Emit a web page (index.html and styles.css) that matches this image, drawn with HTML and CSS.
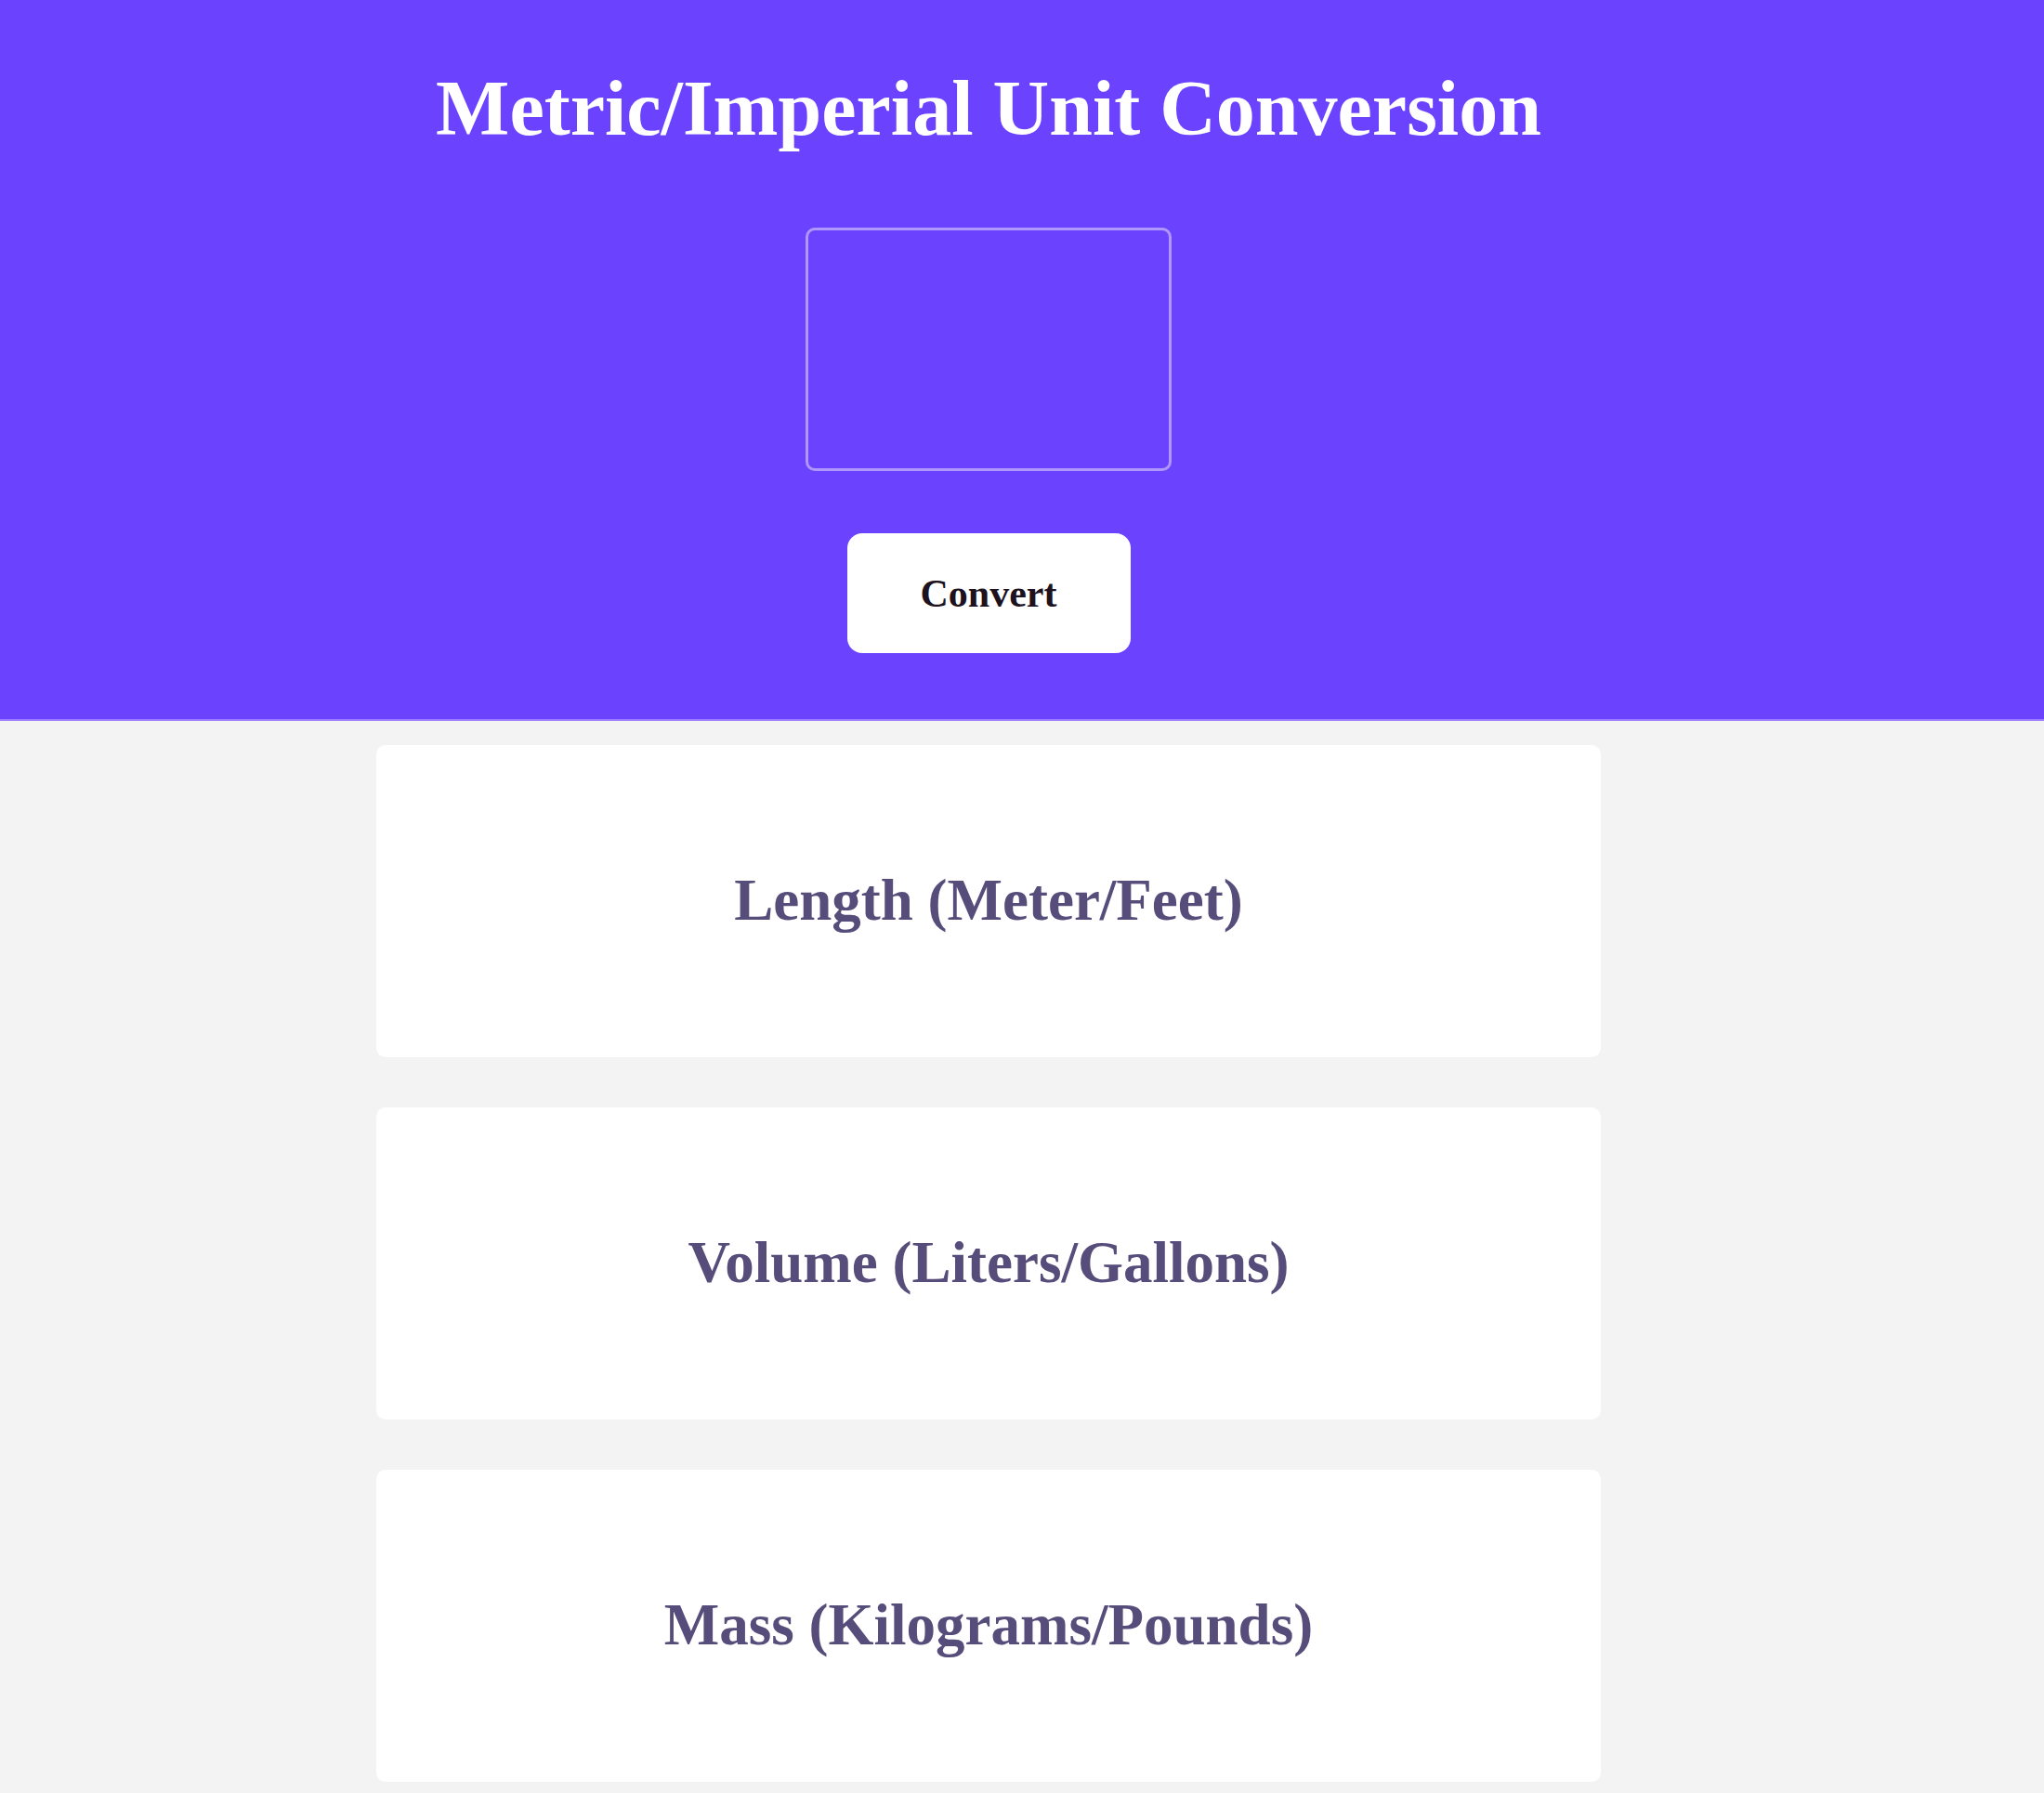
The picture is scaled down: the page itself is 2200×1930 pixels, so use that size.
FILE: index.html
```html
<!DOCTYPE html>
<html lang="en">
<head>
<meta charset="utf-8">
<title>Metric/Imperial Unit Conversion</title>
<link rel="stylesheet" href="styles.css">
</head>
<body>
<header class="hero">
  <div class="hero-inner">
    <h1 class="title">Metric/Imperial Unit Conversion</h1>
    <input class="value-input" type="text" aria-label="Value">
    <button class="convert-btn" type="button">Convert</button>
  </div>
</header>
<main class="results">
  <section class="card"><h2 class="card-title">Length (Meter/Feet)</h2></section>
  <section class="card"><h2 class="card-title">Volume (Liters/Gallons)</h2></section>
  <section class="card"><h2 class="card-title">Mass (Kilograms/Pounds)</h2></section>
</main>
</body>
</html>
```
FILE: styles.css
```css
html, body {
  margin: 0;
  padding: 0;
}
body {
  background: #f3f3f3;
  font-family: "Liberation Serif", "Times New Roman", serif;
  width: 2200px;
  min-height: 1930px;
}
.hero {
  background: #6b43ff;
  border-bottom: 2px solid #9a7eff;
  height: 774px;
  box-sizing: content-box;
}
.hero-inner {
  width: 2128px;
  display: flex;
  flex-direction: column;
  align-items: center;
  padding-top: 67px;
}
.title {
  margin: 0;
  color: #ffffff;
  font-size: 84px;
  line-height: 100px;
  font-weight: bold;
}
.value-input {
  margin-top: 78px;
  width: 394px;
  height: 262px;
  box-sizing: border-box;
  background: transparent;
  border: 3px solid #ae98ff;
  border-radius: 10px;
  outline: none;
  color: #ffffff;
  font-size: 40px;
  font-family: inherit;
}
.convert-btn {
  margin-top: 67px;
  width: 305px;
  height: 129px;
  background: #ffffff;
  border: none;
  border-radius: 16px;
  font-family: "Liberation Serif", "Times New Roman", serif;
  font-weight: bold;
  font-size: 42px;
  color: #1c1220;
  padding: 0;
}
.results {
  width: 2128px;
  display: flex;
  flex-direction: column;
  align-items: center;
  gap: 54px;
  padding-top: 26px;
}
.card {
  width: 1318px;
  height: 336px;
  background: #ffffff;
  border-radius: 10px;
  display: flex;
  align-items: center;
  justify-content: center;
}
.card-title {
  margin: 0;
  font-size: 63px;
  font-weight: bold;
  color: #574d7b;
  line-height: 1.2;
}
```
